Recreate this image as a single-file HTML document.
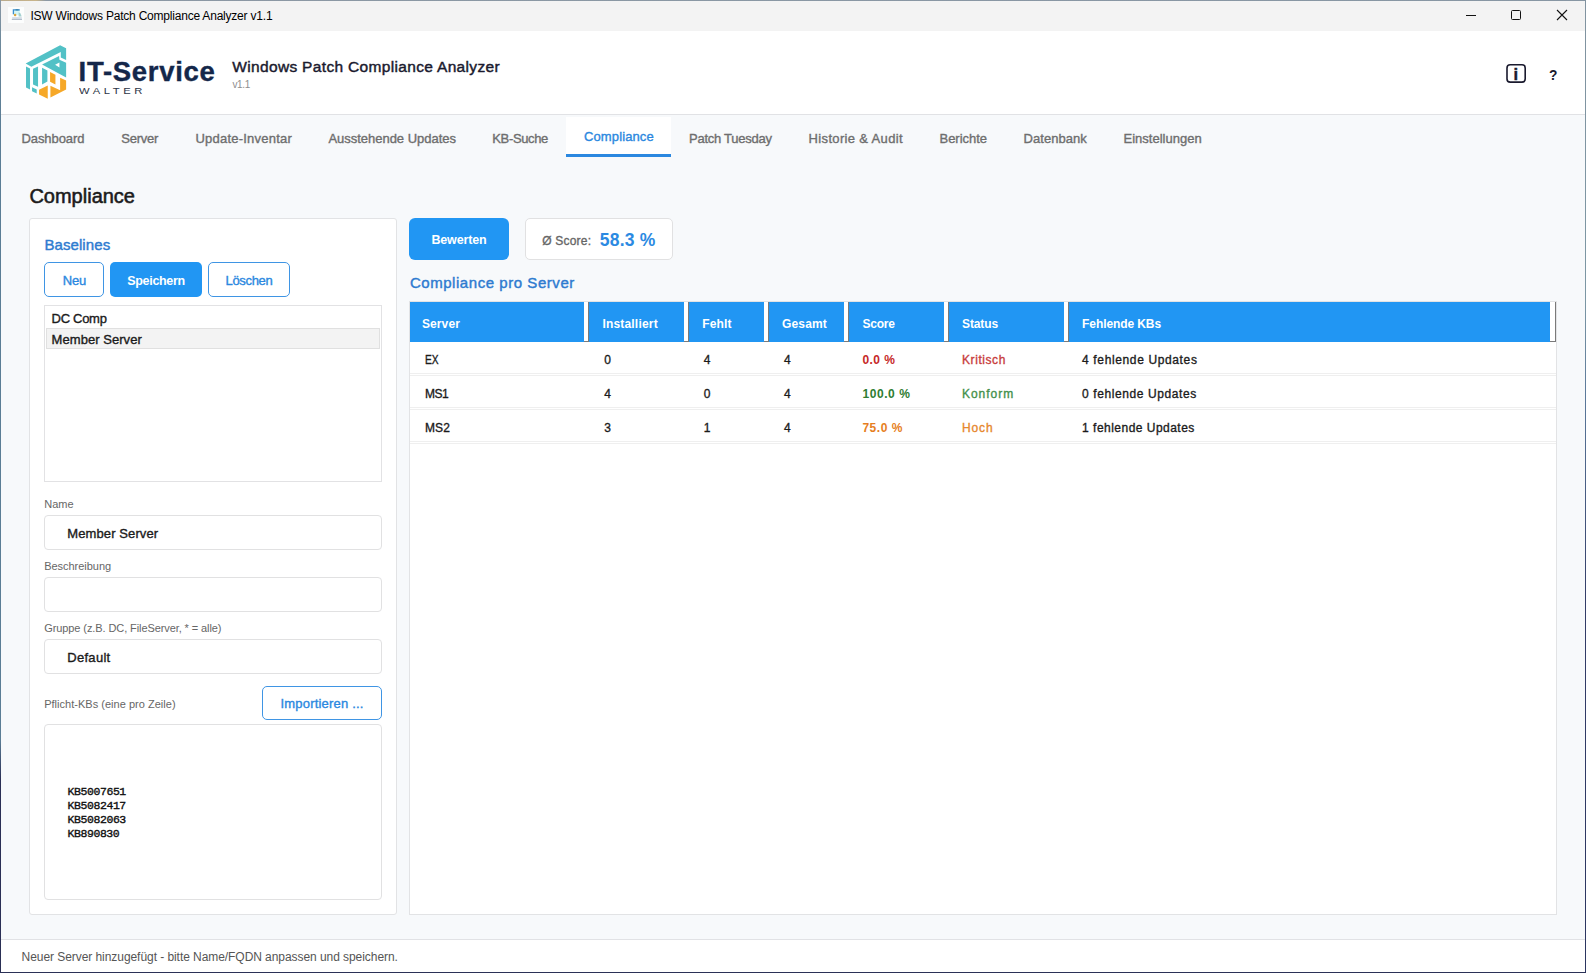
<!DOCTYPE html>
<html lang="de">
<head>
<meta charset="utf-8">
<title>ISW Windows Patch Compliance Analyzer v1.1</title>
<style>
*{box-sizing:border-box;margin:0;padding:0}
html,body{width:1586px;height:973px;overflow:hidden;background:#f7f9fb}
body{font-family:"Liberation Sans",sans-serif;font-size:13px;color:#1b1b1b;position:relative}
.abs{position:absolute}
.t{position:absolute;white-space:nowrap;line-height:1}
.sb{-webkit-text-stroke:0.028em currentColor}
.mono{-webkit-text-stroke:0.032em currentColor}
#frame-l{left:0;top:0;width:1px;height:973px;background:linear-gradient(to bottom,#8a98a6 0,#6f8a9c 40px,#5b7d95 120px,#5b7d95 740px,#2a2f55 780px,#2a2f55 100%)}
#frame-t{left:0;top:0;width:1586px;height:1px;background:linear-gradient(to right,#b9aa8c 0,#c8b48a 36px,#8c98a4 46px,#8796a3 100%)}
#frame-r{left:1585px;top:0;width:1px;height:973px;background:linear-gradient(to bottom,#8193a0 0,#7c97a4 300px,#5a789a 400px,#333d68 600px,#2b3560 100%)}
#frame-b{left:0;top:972px;width:1586px;height:1px;background:#2b3157}
#titlebar{left:1px;top:1px;width:1584px;height:30px;background:#f3f3f3}
#header{left:1px;top:31px;width:1584px;height:83px;background:#fff}
#header-line{left:1px;top:114px;width:1584px;height:1px;background:#e1e2e5}
#statusbar{left:1px;top:939px;width:1584px;height:33px;background:#fff;border-top:1px solid #e1e2e5}
#tab-active{left:566px;top:117px;width:105px;height:40px;background:#fff;border-bottom:3px solid #2b88e0}
.panel{background:#fff;border:1px solid #e2e3e5;border-radius:3px}
.btn{border-radius:5px}
.btn-o{background:#fff;border:1px solid #3f95e4}
.btn-f{background:#2196f3}
.inp{background:#fff;border:1px solid #e1e1e2;border-radius:4px}
.sep{position:absolute;top:302px;width:5.4px;height:40px;background:#fff;border-right:1.4px solid #7a7a7a;border-bottom:1px solid #7a7a7a}
.rowline{position:absolute;left:410px;width:1146px;height:1px;background:#efefef}
</style>
</head>
<body>
<div class="abs" id="titlebar"></div>
<div class="abs" id="header"></div>
<div class="abs" id="header-line"></div>
<div class="abs" id="statusbar"></div>

<!-- title bar icon -->
<svg class="abs" style="left:8px;top:7px" width="16" height="16" viewBox="0 0 16 16">
  <rect x="0" y="0" width="16" height="16" fill="#fcfdfd"/>
  <rect x="5.4" y="2.8" width="6.4" height="5.2" fill="#d4f6f6"/>
  <path d="M5.4 7.2V2.8H11.8" fill="none" stroke="#3a8fcf" stroke-width="1.3"/>
  <path d="M7.6 2.9h3" stroke="#1f6f95" stroke-width="0.9"/>
  <path d="M10.6 5.2l2 1.2l1 3.2h-3z" fill="#8fc4c4" opacity="0.8"/>
  <circle cx="7.1" cy="8" r="1.25" fill="#d9a23a"/>
  <rect x="4.2" y="10.2" width="9.6" height="1.6" fill="#cfd9e4"/>
  <rect x="3.8" y="11.9" width="10.2" height="0.9" fill="#9fadbf"/>
</svg>

<!-- window buttons -->
<svg class="abs" style="left:1460px;top:5px" width="115" height="22" viewBox="0 0 115 22">
  <path d="M6 10.5h10" stroke="#111" stroke-width="1" fill="none"/>
  <rect x="51.5" y="5.5" width="9" height="9" rx="1" fill="none" stroke="#111" stroke-width="1"/>
  <path d="M97 5l10 10M107 5l-10 10" stroke="#111" stroke-width="1.1" fill="none"/>
</svg>

<!-- logo -->
<svg class="abs" style="left:20px;top:40px" width="200" height="65" viewBox="20 40 200 65">
  <g transform="translate(20 40) scale(0.066845)">
    <polygon fill="#52c1c6" points="85,350 600,80 690,125 690,300 610,262 610,180 170,400"/>
    <path fill="#52c1c6" fill-rule="evenodd" d="M330,365 L585,240 L590,295 L690,340 L690,560 Z M525,370 L590,335 L590,410 Z"/>
    <polygon fill="#52c1c6" points="90,395 150,425 150,740 90,710"/>
    <polygon fill="#52c1c6" points="195,430 270,395 270,700 195,665"/>
    <polygon fill="#52c1c6" points="330,415 410,455 410,620 330,665"/>
    <polygon fill="#52c1c6" points="180,705 250,740 250,800 180,765"/>
    <polygon fill="#f6a828" points="285,745 415,680 415,880 285,815"/>
    <polygon fill="#f6a828" points="450,480 530,520 530,665 450,625"/>
    <polygon fill="#f6a828" points="600,565 690,605 690,740 455,860 455,685 600,750"/>
  </g>
</svg>

<!-- header icons -->
<svg class="abs" style="left:1500px;top:60px" width="70" height="28" viewBox="1500 60 70 28">
  <rect x="1507" y="64.8" width="18.2" height="17.3" rx="3.2" fill="#fff" stroke="#1a1a2e" stroke-width="1.6"/>
</svg>

<!-- active tab -->
<div class="abs" id="tab-active"></div>

<!-- left panel -->
<div class="abs panel" style="left:29px;top:218px;width:368px;height:697px"></div>
<div class="abs btn btn-o" style="left:44px;top:262px;width:60px;height:35px"></div>
<div class="abs btn btn-f" style="left:110px;top:262px;width:92px;height:35px"></div>
<div class="abs btn btn-o" style="left:208px;top:262px;width:82px;height:35px"></div>
<div class="abs" style="left:44px;top:305px;width:338px;height:177px;background:#fff;border:1px solid #e2e2e4"></div>
<div class="abs" style="left:46px;top:328px;width:334px;height:21px;background:#f3f3f3;border:1px solid #e0e0e0"></div>
<div class="abs inp" style="left:44px;top:515px;width:338px;height:35px"></div>
<div class="abs inp" style="left:44px;top:577px;width:338px;height:35px"></div>
<div class="abs inp" style="left:44px;top:639px;width:338px;height:35px"></div>
<div class="abs btn btn-o" style="left:262px;top:686px;width:120px;height:34px"></div>
<div class="abs inp" style="left:44px;top:724px;width:338px;height:176px"></div>

<!-- right side -->
<div class="abs btn btn-f" style="left:409px;top:218px;width:100px;height:42px;border-radius:6px"></div>
<div class="abs inp" style="left:525px;top:218px;width:148px;height:42px;border-radius:5px"></div>
<div class="abs" style="left:409px;top:301px;width:1148px;height:614px;background:#fff;border:1px solid #e2e3e5"></div>
<div class="abs" style="left:410px;top:302px;width:1146px;height:40px;background:#2196f3"></div>
<div class="sep" style="left:584px"></div>
<div class="sep" style="left:684px"></div>
<div class="sep" style="left:764px"></div>
<div class="sep" style="left:844px"></div>
<div class="sep" style="left:944px"></div>
<div class="sep" style="left:1064px"></div>
<div class="sep" style="left:1550px;width:6px;border-right-width:1px"></div>
<div class="rowline" style="top:373px"></div><div class="rowline" style="top:375px"></div>
<div class="rowline" style="top:407px"></div><div class="rowline" style="top:409px"></div>
<div class="rowline" style="top:441px"></div><div class="rowline" style="top:443px"></div>

<div class="t" style="left:30.4px;top:10px;font-size:12px;color:#000;letter-spacing:-0.21px;">ISW Windows Patch Compliance Analyzer v1.1</div>
<div class="t sb" style="left:232.3px;top:59px;font-size:15.5px;color:#1a1a2e;letter-spacing:0.33px;">Windows Patch Compliance Analyzer</div>
<div class="t" style="left:232.4px;top:80px;font-size:10px;color:#8e8e8e;letter-spacing:-0.34px;">v1.1</div>
<div class="t" style="left:78.6px;top:58px;font-size:27.5px;color:#14274a;letter-spacing:0.69px;font-weight:bold;-webkit-text-stroke:0.4px currentColor;">IT-Service</div>
<div class="t" style="left:79.1px;top:86px;font-size:9.5px;color:#2c3446;letter-spacing:3.04px;transform:scaleX(1.180);transform-origin:0 0;">WALTER</div>
<div class="t" style="left:1549.3px;top:67px;font-size:15.5px;color:#1a1a2e;transform:scaleX(0.887);transform-origin:0 0;font-weight:bold;">?</div>
<div class="t" style="left:1513.5px;top:66px;font-size:16.5px;color:#1a1a2e;font-weight:bold;-webkit-text-stroke:0.4px currentColor;">i</div>
<div class="t sb" style="left:21.4px;top:132px;font-size:13px;color:#6e6e6e;letter-spacing:-0.06px;">Dashboard</div>
<div class="t sb" style="left:121.3px;top:132px;font-size:13px;color:#6e6e6e;letter-spacing:-0.24px;">Server</div>
<div class="t sb" style="left:195.5px;top:132px;font-size:13px;color:#6e6e6e;letter-spacing:0.22px;">Update-Inventar</div>
<div class="t sb" style="left:328.4px;top:132px;font-size:13px;color:#6e6e6e;letter-spacing:-0.02px;">Ausstehende Updates</div>
<div class="t sb" style="left:492.3px;top:132px;font-size:13px;color:#6e6e6e;letter-spacing:-0.36px;">KB-Suche</div>
<div class="t sb" style="left:689.0px;top:132px;font-size:13px;color:#6e6e6e;letter-spacing:-0.25px;">Patch Tuesday</div>
<div class="t sb" style="left:808.6px;top:132px;font-size:13px;color:#6e6e6e;letter-spacing:0.34px;">Historie &amp; Audit</div>
<div class="t sb" style="left:939.5px;top:132px;font-size:13px;color:#6e6e6e;letter-spacing:-0.03px;">Berichte</div>
<div class="t sb" style="left:1023.6px;top:132px;font-size:13px;color:#6e6e6e;letter-spacing:0.04px;">Datenbank</div>
<div class="t sb" style="left:1123.5px;top:132px;font-size:13px;color:#6e6e6e;letter-spacing:0.01px;">Einstellungen</div>
<div class="t sb" style="left:584.0px;top:130px;font-size:13px;color:#2b88e0;letter-spacing:0.12px;">Compliance</div>
<div class="t sb" style="left:29.4px;top:186px;font-size:20px;color:#1b1b1b;">Compliance</div>
<div class="t sb" style="left:44.4px;top:237px;font-size:15px;color:#2e7bd0;letter-spacing:0.09px;">Baselines</div>
<div class="t sb" style="left:62.8px;top:274px;font-size:13px;color:#2b88e0;letter-spacing:-0.23px;">Neu</div>
<div class="t" style="left:127.2px;top:275px;font-size:12.5px;color:#fff;letter-spacing:-0.30px;font-weight:bold;">Speichern</div>
<div class="t sb" style="left:225.6px;top:274px;font-size:13px;color:#2b88e0;letter-spacing:-0.34px;">Löschen</div>
<div class="t sb" style="left:51.6px;top:312px;font-size:13px;color:#1b1b1b;letter-spacing:-0.30px;">DC Comp</div>
<div class="t sb" style="left:51.6px;top:333px;font-size:13px;color:#1b1b1b;letter-spacing:0.05px;">Member Server</div>
<div class="t" style="left:44.2px;top:499px;font-size:11px;color:#666;letter-spacing:0.02px;">Name</div>
<div class="t sb" style="left:67.3px;top:527px;font-size:13px;color:#1b1b1b;letter-spacing:0.10px;">Member Server</div>
<div class="t" style="left:44.2px;top:561px;font-size:11px;color:#666;letter-spacing:-0.03px;">Beschreibung</div>
<div class="t" style="left:44.2px;top:623px;font-size:11px;color:#666;letter-spacing:-0.09px;">Gruppe (z.B. DC, FileServer, * = alle)</div>
<div class="t sb" style="left:67.3px;top:651px;font-size:13px;color:#1b1b1b;letter-spacing:0.28px;">Default</div>
<div class="t" style="left:44.2px;top:699px;font-size:11px;color:#666;letter-spacing:0.02px;">Pflicht-KBs (eine pro Zeile)</div>
<div class="t sb" style="left:280.5px;top:697px;font-size:13px;color:#2b88e0;letter-spacing:0.19px;">Importieren ...</div>
<div class="t mono" style="left:67.6px;top:786px;font-size:11.5px;color:#111;letter-spacing:-0.43px;font-family:'Liberation Mono', monospace;">KB5007651</div>
<div class="t mono" style="left:67.6px;top:800px;font-size:11.5px;color:#111;letter-spacing:-0.43px;font-family:'Liberation Mono', monospace;">KB5082417</div>
<div class="t mono" style="left:67.6px;top:814px;font-size:11.5px;color:#111;letter-spacing:-0.43px;font-family:'Liberation Mono', monospace;">KB5082063</div>
<div class="t mono" style="left:67.6px;top:828px;font-size:11.5px;color:#111;letter-spacing:-0.44px;font-family:'Liberation Mono', monospace;">KB890830</div>
<div class="t" style="left:21.6px;top:951px;font-size:12px;color:#555;letter-spacing:-0.06px;">Neuer Server hinzugefügt - bitte Name/FQDN anpassen und speichern.</div>
<div class="t" style="left:431.4px;top:234px;font-size:12.5px;color:#fff;letter-spacing:-0.15px;font-weight:bold;">Bewerten</div>
<div class="t sb" style="left:542.3px;top:235px;font-size:12px;color:#666;letter-spacing:0.19px;">Ø Score:</div>
<div class="t" style="left:599.8px;top:232px;font-size:17.5px;color:#2b8ae2;letter-spacing:0.22px;font-weight:bold;">58.3 %</div>
<div class="t sb" style="left:409.9px;top:275px;font-size:15px;color:#2e7bd0;letter-spacing:0.55px;">Compliance pro Server</div>
<div class="t" style="left:422.0px;top:318px;font-size:12px;color:#fff;letter-spacing:0.09px;font-weight:bold;">Server</div>
<div class="t" style="left:602.4px;top:318px;font-size:12px;color:#fff;letter-spacing:0.19px;font-weight:bold;">Installiert</div>
<div class="t" style="left:702.3px;top:318px;font-size:12px;color:#fff;letter-spacing:0.11px;font-weight:bold;">Fehlt</div>
<div class="t" style="left:782.1px;top:318px;font-size:12px;color:#fff;letter-spacing:0.13px;font-weight:bold;">Gesamt</div>
<div class="t" style="left:862.4px;top:318px;font-size:12px;color:#fff;letter-spacing:-0.21px;font-weight:bold;">Score</div>
<div class="t" style="left:962.0px;top:318px;font-size:12px;color:#fff;letter-spacing:-0.12px;font-weight:bold;">Status</div>
<div class="t" style="left:1082.1px;top:318px;font-size:12px;color:#fff;letter-spacing:-0.09px;font-weight:bold;">Fehlende KBs</div>
<div class="t sb" style="left:424.9px;top:354px;font-size:12px;color:#1b1b1b;transform:scaleX(0.849);transform-origin:0 0;">EX</div>
<div class="t sb" style="left:604.3px;top:354px;font-size:12px;color:#1b1b1b;">0</div>
<div class="t sb" style="left:703.8px;top:354px;font-size:12px;color:#1b1b1b;">4</div>
<div class="t sb" style="left:784.0px;top:354px;font-size:12px;color:#1b1b1b;">4</div>
<div class="t" style="left:862.4px;top:354px;font-size:12px;color:#c62828;letter-spacing:0.45px;font-weight:bold;">0.0 %</div>
<div class="t sb" style="left:962.0px;top:354px;font-size:12px;color:#c83c3c;letter-spacing:0.57px;">Kritisch</div>
<div class="t sb" style="left:1082.1px;top:354px;font-size:12px;color:#1b1b1b;letter-spacing:0.63px;">4 fehlende Updates</div>
<div class="t sb" style="left:424.9px;top:388px;font-size:12px;color:#1b1b1b;letter-spacing:-0.39px;">MS1</div>
<div class="t sb" style="left:604.3px;top:388px;font-size:12px;color:#1b1b1b;">4</div>
<div class="t sb" style="left:703.8px;top:388px;font-size:12px;color:#1b1b1b;">0</div>
<div class="t sb" style="left:784.0px;top:388px;font-size:12px;color:#1b1b1b;">4</div>
<div class="t" style="left:862.4px;top:388px;font-size:12px;color:#2e7d32;letter-spacing:0.59px;font-weight:bold;">100.0 %</div>
<div class="t sb" style="left:962.0px;top:388px;font-size:12px;color:#43904a;letter-spacing:0.97px;">Konform</div>
<div class="t sb" style="left:1082.1px;top:388px;font-size:12px;color:#1b1b1b;letter-spacing:0.59px;">0 fehlende Updates</div>
<div class="t sb" style="left:424.9px;top:422px;font-size:12px;color:#1b1b1b;letter-spacing:0.21px;">MS2</div>
<div class="t sb" style="left:604.3px;top:422px;font-size:12px;color:#1b1b1b;">3</div>
<div class="t sb" style="left:703.8px;top:422px;font-size:12px;color:#1b1b1b;">1</div>
<div class="t sb" style="left:784.0px;top:422px;font-size:12px;color:#1b1b1b;">4</div>
<div class="t" style="left:862.4px;top:422px;font-size:12px;color:#e67e22;letter-spacing:0.55px;font-weight:bold;">75.0 %</div>
<div class="t sb" style="left:962.0px;top:422px;font-size:12px;color:#e6872e;letter-spacing:0.89px;">Hoch</div>
<div class="t sb" style="left:1082.1px;top:422px;font-size:12px;color:#1b1b1b;letter-spacing:0.48px;">1 fehlende Updates</div>

<div class="abs" id="frame-t"></div>
<div class="abs" id="frame-l"></div>
<div class="abs" id="frame-r"></div>
<div class="abs" id="frame-b"></div>
</body>
</html>
